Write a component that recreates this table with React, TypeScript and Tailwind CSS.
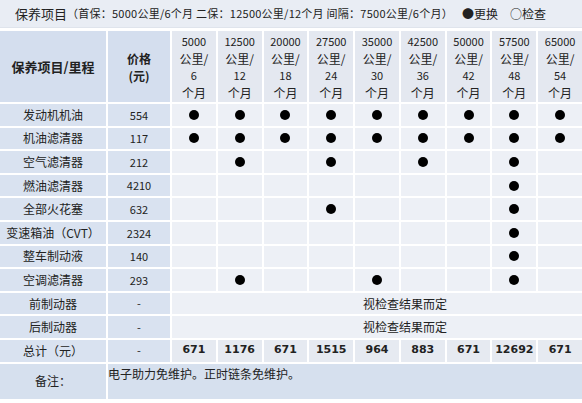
const miles = [
  ["5000", "6"],
  ["12500", "12"],
  ["20000", "18"],
  ["27500", "24"],
  ["35000", "30"],
  ["42500", "36"],
  ["50000", "42"],
  ["57500", "48"],
  ["65000", "54"],
];

// 1 = 更换 dot
const rows = [
  { name: "发动机机油", price: "554", marks: [1, 1, 1, 1, 1, 1, 1, 1, 1] },
  { name: "机油滤清器", price: "117", marks: [1, 1, 1, 1, 1, 1, 1, 1, 1] },
  { name: "空气滤清器", price: "212", marks: [0, 1, 0, 1, 0, 1, 0, 1, 0] },
  { name: "燃油滤清器", price: "4210", marks: [0, 0, 0, 0, 0, 0, 0, 1, 0] },
  { name: "全部火花塞", price: "632", marks: [0, 0, 0, 1, 0, 0, 0, 1, 0] },
  { name: "变速箱油（CVT）", price: "2324", marks: [0, 0, 0, 0, 0, 0, 0, 1, 0] },
  { name: "整车制动液", price: "140", marks: [0, 0, 0, 0, 0, 0, 0, 1, 0] },
  { name: "空调滤清器", price: "293", marks: [0, 1, 0, 0, 1, 0, 0, 1, 0] },
];

const totals = ["671", "1176", "671", "1515", "964", "883", "671", "12692", "671"];

const cjk = "font-['SimSun','Noto_Sans_CJK_SC',sans-serif]";

const App = () => {
  return (
    <div className={`w-[582px] h-[403px] bg-white text-[#222] ${cjk}`}>
      {/* Title */}
      <div className="h-[28px] bg-[#e9edf4] border-b border-[#dfe4ec] flex items-center pl-[15px] whitespace-nowrap">
        <span className="text-[13px]">保养项目</span>
        <span className="text-[11px] tracking-[0.25px]">（首保：5000公里/6个月 二保：12500公里/12个月 间隔：7500公里/6个月）</span>
        <span className="text-[12px] ml-[9px]">●更换</span>
        <span className="text-[12px] ml-[12px]">○检查</span>
      </div>

      <div className="mt-[3px] grid grid-cols-[106px_62px_repeat(9,minmax(0,1fr))] grid-rows-[71px_repeat(11,21.6px)] gap-[2px]">
        {/* Header */}
        <div className="bg-[#d4deee] flex items-center justify-center font-bold text-[13px]">
          保养项目/里程
        </div>
        <div className="bg-[#d4deee] flex flex-col items-center justify-center font-bold text-[12px] leading-[17px]">
          <span>价格</span>
          <span>(元)</span>
        </div>
        {miles.map(([km, mo]) => (
          <div
            key={km}
            className="bg-[#e4e8f0] flex flex-col items-center justify-center text-[12px] leading-[17px]"
          >
            <span className="text-[11px]">{km}</span>
            <span>公里/</span>
            <span className="text-[11px]">{mo}</span>
            <span>个月</span>
          </div>
        ))}

        {/* Rows */}
        {rows.map((r) => (
          <div key={r.name} className="contents">
            <div className="bg-[#d9e2f0] flex items-center justify-center text-[12px] whitespace-nowrap">
              {r.name}
            </div>
            <div className="bg-[#d9e2f0] flex items-center justify-center text-[11px]">{r.price}</div>
            {r.marks.map((m, i) => (
              <div key={i} className="bg-[#edf0f6] flex items-center justify-center">
                {m === 1 && <div className="w-[10px] h-[10px] rounded-full bg-black" />}
              </div>
            ))}
          </div>
        ))}

        {["前制动器", "后制动器"].map((n) => (
          <div key={n} className="contents">
            <div className="bg-[#d9e2f0] flex items-center justify-center text-[12px]">{n}</div>
            <div className="bg-[#d9e2f0] flex items-center justify-center text-[11px]">-</div>
            <div className="col-span-9 bg-[#edf0f6] flex items-center pl-[191px] text-[12px]">视检查结果而定</div>
          </div>
        ))}

        {/* Totals */}
        <div className="bg-[#d9e2f0] flex items-center justify-center text-[12px]">总计（元）</div>
        <div className="bg-[#d9e2f0] flex items-center justify-center text-[11px]">-</div>
        {totals.map((t, i) => (
          <div key={i} className="bg-[#e6eaf1] flex items-center justify-center text-[11px] font-bold font-['Verdana','DejaVu_Sans',sans-serif]">
            {t}
          </div>
        ))}
      </div>

      {/* Remark */}
      <div className="mt-[2px] grid grid-cols-[106px_1fr] gap-[2px] h-[35px]">
        <div className="bg-[#d6e0ee] flex items-center justify-center text-[12px]">备注：</div>
        <div className="bg-[#d6e0ee] text-[12px] pt-[1px] pl-[0px]">电子助力免维护。正时链条免维护。</div>
      </div>
    </div>
  );
};

export default App;
